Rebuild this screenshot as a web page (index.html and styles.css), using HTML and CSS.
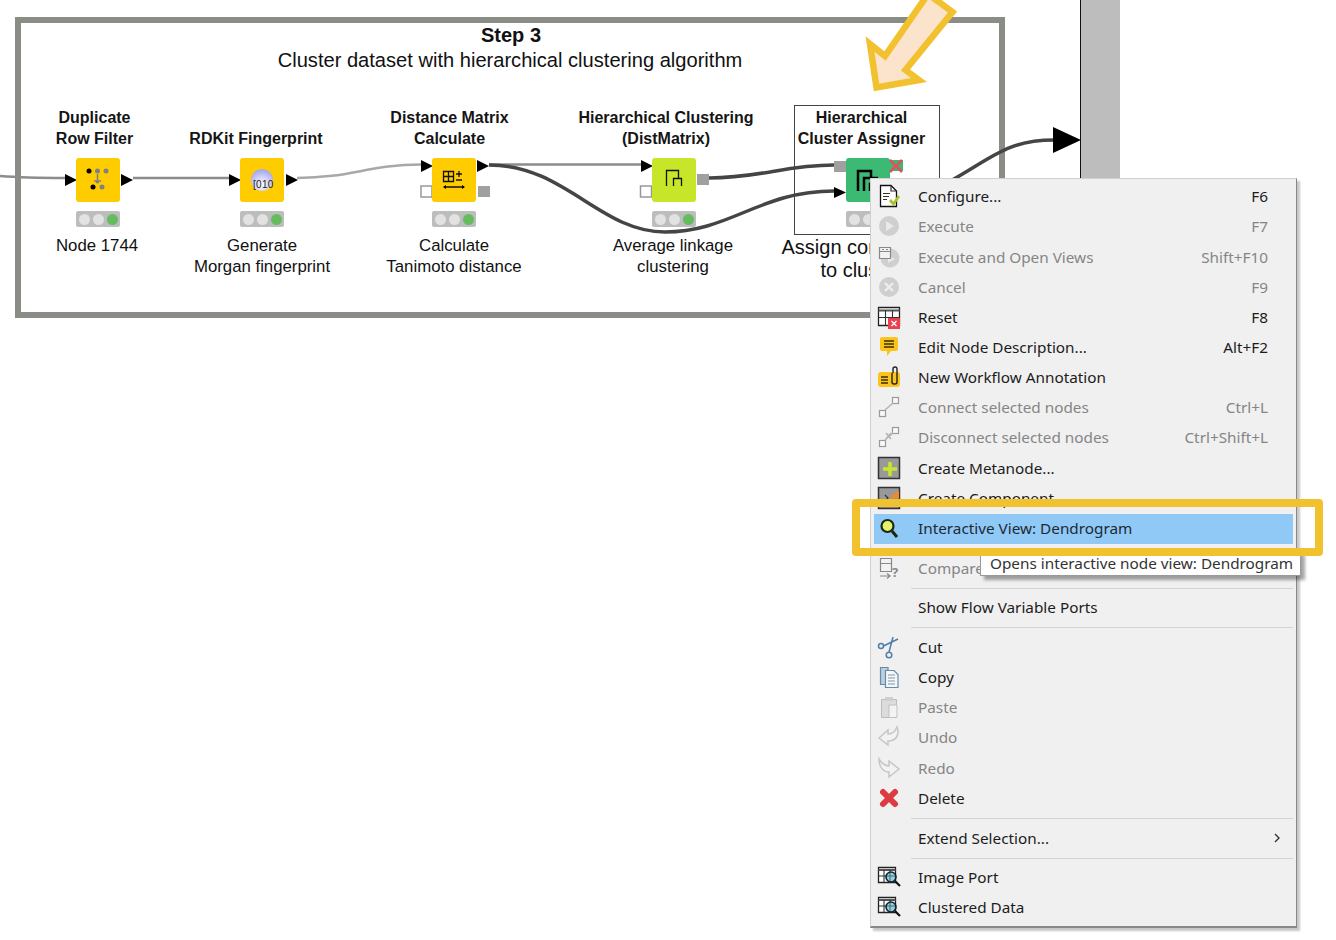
FILE: index.html
```html
<!DOCTYPE html>
<html lang="en">
<head>
<meta charset="utf-8">
<title>Workflow context menu</title>
<link rel="stylesheet" href="styles.css">
</head>
<body>
<main class="canvas">
  <div class="column"></div>
  <section class="frame">
    <h2 class="frame-title">Step 3</h2>
    <p class="frame-sub">Cluster dataset with hierarchical clustering algorithm</p>
  </section>

  <div class="selection"></div>

  <svg class="layer" width="1336" height="940" viewBox="0 0 1336 940">
    <g class="wire-light">
      <path d="M0 176C25 178 45 178 65 178"/>
      <path d="M133 178H229"/>
      <path class="pale" d="M297 178C350 178 370 164.500 421 164.500"/>
      <path d="M489 164.500H641"/>
    </g>
    <g class="wire-dark">
      <path d="M489 165C565 165 600 232 665 232C730 232 760 191 834 191"/>
      <path d="M709 178C760 178 785 165 834 165"/>
      <path d="M945 184C990 160 1005 140 1054 140"/>
    </g>
    <g class="port">
      <path d="M65 174L77 180L65 186Z"/><path d="M121 174L133 180L121 186Z"/>
      <path d="M229 174L241 180L229 186Z"/><path d="M286 174L298 180L286 186Z"/>
      <path d="M421 160L433 166L421 172Z"/><path d="M477 160L489 166L477 172Z"/>
      <path d="M641 160L653 166L641 172Z"/>
      <path d="M834 187L846 192.500L834 198Z"/>
      <path d="M1053 127L1081 140L1053 153Z"/>
    </g>
    <g class="port-empty"><rect x="421" y="186" width="11" height="11"/><rect x="640.500" y="186" width="11" height="11"/></g>
    <g class="port-flow"><rect x="478" y="186" width="12" height="11"/><rect x="697" y="174" width="12" height="11"/><rect x="834" y="161" width="12" height="11"/></g>
  </svg>

  <article class="node n1">
    <div class="box amber">
      <svg width="44" height="44" viewBox="0 0 44 44"><circle cx="13" cy="13" r="2.500"/><circle class="dot-grey" cx="21.500" cy="13" r="2.500"/><circle class="dot-grey" cx="30" cy="13" r="2.500"/><path class="arrow-grey" d="M21.500 16V25M18 23H25M20 24.500H23"/><circle cx="17" cy="29" r="2.500"/><circle class="dot-grey" cx="26" cy="29" r="2.500"/></svg>
    </div>
    <div class="lights"><i></i><i></i><i class="on"></i></div>
  </article>
  <article class="node n2">
    <div class="box amber">
      <svg width="44" height="44" viewBox="0 0 44 44"><defs><radialGradient id="sph" cx="50%" cy="70%" r="65%"><stop offset="0" stop-color="#fff"/><stop offset="1" stop-color="#a8a8ee"/></radialGradient></defs><circle cx="22" cy="22" r="11" fill="url(#sph)"/><text class="bits" x="13" y="30">[010</text></svg>
    </div>
    <div class="lights"><i></i><i></i><i class="on"></i></div>
  </article>
  <article class="node n3">
    <div class="box amber">
      <svg width="44" height="44" viewBox="0 0 44 44"><path class="ink" d="M11.500 13.500H21.500V23.500H11.500ZM16.500 13.500V23.500M11.500 18.500H21.500M24 16H30M27 13V19M24 22H30M12 29H32"/><path d="M11 29L14 27V31ZM33 29L30 27V31Z"/></svg>
    </div>
    <div class="lights"><i></i><i></i><i class="on"></i></div>
  </article>
  <article class="node n4">
    <div class="box lime">
      <svg width="44" height="44" viewBox="0 0 44 44"><path class="ink" d="M14.500 28V12.500H26.500V20.500M21.500 28V20.500H29.500V28"/></svg>
    </div>
    <div class="lights"><i></i><i></i><i class="on"></i></div>
  </article>
  <article class="node n5">
    <div class="box green">
      <svg width="44" height="44" viewBox="0 0 44 44"><path class="ink-thick" d="M12 33V13H25V20M18 33V20H32M24 33V26H32"/></svg>
    </div>
    <div class="lights"><i></i><i></i><i class="on"></i></div>
  </article>
  <svg class="warn" width="14" height="14" viewBox="0 0 14 14"><rect width="14" height="11" y="1" fill="#3cb973"/><path d="M1 1L13 13M13 1L1 13" stroke="#e2505a" stroke-width="2.500"/></svg>

  <div class="tag name l1">Duplicate<br>Row Filter</div>
  <div class="tag name l2">RDKit Fingerprint</div>
  <div class="tag name l3">Distance Matrix<br>Calculate</div>
  <div class="tag name l4">Hierarchical Clustering<br>(DistMatrix)</div>
  <div class="tag name l5">Hierarchical<br>Cluster Assigner</div>
  <div class="tag note d1">Node 1744</div>
  <div class="tag note d2">Generate<br>Morgan fingerprint</div>
  <div class="tag note d3">Calculate<br>Tanimoto distance</div>
  <div class="tag note d4">Average linkage<br>clustering</div>
  <div class="tag note-big d5">Assign compounds<br>to clusters</div>

  <nav class="menu">
    <div class="row"><svg class="ic" viewBox="0 0 24 24"><path class="doc" d="M3.500 1.500H14L19.500 7V22.500H3.500Z"/><path class="doc-l" d="M14 1.500V7H19.500M6 9.500H13M6 12.500H12M6 15.500H10"/><path class="tick" d="M13 16L16.500 20L22 12"/></svg><span>Configure...</span><kbd>F6</kbd></div>
    <div class="row off"><svg class="ic" viewBox="0 0 24 24"><circle class="disc" cx="12" cy="12" r="10"/><path class="disc-in" d="M9 7L17 12L9 17Z"/></svg><span>Execute</span><kbd>F7</kbd></div>
    <div class="row off"><svg class="ic" viewBox="0 0 24 24"><circle class="disc" cx="13" cy="13" r="9.500"/><path class="disc-in" d="M11 10L18 14L11 18Z"/><path class="win" d="M2.500 2.500H13.500V13.500H2.500Z"/><path class="win-l" d="M2.500 6.500H13.500M5 4.500H7M9 4.500H11"/></svg><span>Execute and Open Views</span><kbd>Shift+F10</kbd></div>
    <div class="row off"><svg class="ic" viewBox="0 0 24 24"><circle class="disc" cx="12" cy="12" r="10"/><path class="disc-x" d="M8 8L16 16M16 8L8 16"/></svg><span>Cancel</span><kbd>F9</kbd></div>
    <div class="row"><svg class="ic" viewBox="0 0 24 24"><path class="tbl" d="M1.500 2.500H22.500V20.500H1.500Z"/><path class="tbl-h" d="M1.500 5.500H22.500"/><path class="tbl-l" d="M1.500 12.500H22.500M8.500 5.500V20.500M15.500 5.500V20.500"/><rect class="x-box" x="11" y="13" width="12" height="11"/><path class="x-mark" d="M14.500 16L19.500 21M19.500 16L14.500 21"/></svg><span>Reset</span><kbd>F8</kbd></div>
    <div class="row"><svg class="ic" viewBox="0 0 24 24"><path class="note-ic" d="M5 2H19Q21 2 21 4V14Q21 16 19 16H14L10 21V16H5Q3 16 3 14V4Q3 2 5 2Z"/><path class="note-l" d="M7 6H17M7 9H17M7 12H17"/></svg><span>Edit Node Description...</span><kbd>Alt+F2</kbd></div>
    <div class="row"><svg class="ic" viewBox="0 0 24 24"><rect class="note-ic" x="1" y="7" width="22" height="15" rx="3"/><path class="note-l" d="M4 12H11M4 15H11M4 18H11"/><path class="clip" d="M15 8V17Q15 19 17 19H18Q20 19 20 17V4Q20 2 18 2Q16 2 16 4V8"/></svg><span>New Workflow Annotation</span></div>
    <div class="row off"><svg class="ic" viewBox="0 0 24 24"><rect class="sq" x="2.500" y="15.500" width="6" height="6"/><rect class="sq" x="15.500" y="2.500" width="6" height="6"/><path class="sq-l" d="M8 15L16 8"/></svg><span>Connect selected nodes</span><kbd>Ctrl+L</kbd></div>
    <div class="row off"><svg class="ic" viewBox="0 0 24 24"><rect class="sq" x="2.500" y="15.500" width="6" height="6"/><rect class="sq" x="15.500" y="2.500" width="6" height="6"/><path class="sq-l" d="M8 15L16 8M9 8L14 14M14 8L9 14"/></svg><span>Disconnect selected nodes</span><kbd>Ctrl+Shift+L</kbd></div>
    <div class="row"><svg class="ic" viewBox="0 0 24 24"><rect class="meta" x="1.500" y="1.500" width="21" height="21"/><path class="plus" d="M13 6V20M6 13H20"/></svg><span>Create Metanode...</span></div>
    <div class="row"><svg class="ic" viewBox="0 0 24 24"><rect class="meta" x="1.500" y="1.500" width="21" height="21"/><path class="comp" d="M15 9L22 5V12H14Z"/><path class="comp-l" d="M8 9L11 12L8 15"/></svg><span>Create Component...</span></div>
    <div class="row hot"><svg class="ic" viewBox="0 0 24 24"><circle class="lens" cx="10.500" cy="10" r="6"/><path class="handle" d="M15 15L20 21"/></svg><span>Interactive View: Dendrogram</span></div>
    <hr class="sep">
    <div class="row off"><svg class="ic" viewBox="0 0 24 24"><path class="win" d="M3.500 2.500H14.500V15.500H3.500Z"/><path class="win-l" d="M3.500 7.500H14.500M3 20H13M10 17.500L13 20L10 22.500"/><text class="qm" x="15" y="21">?</text></svg><span class="cut-off">Compare Nodes</span></div>
    <hr class="sep">
    <div class="row"><i class="ic"></i><span>Show Flow Variable Ports</span></div>
    <hr class="sep">
    <div class="row"><svg class="ic" viewBox="0 0 24 24"><circle class="sc" cx="4" cy="11" r="2.500"/><circle class="sc" cx="12" cy="20" r="2.800"/><path class="sc" d="M6.500 11L21 4M12 17L16 2"/></svg><span>Cut</span></div>
    <div class="row"><svg class="ic" viewBox="0 0 24 24"><path class="pg-b" d="M3.500 2.500H11V19.500H3.500Z"/><path class="pg" d="M8.500 5.500H17L21 9.500V22.500H8.500Z"/><path class="pg-l" d="M11 10H18M11 13H18M11 16H18M11 19H18"/></svg><span>Copy</span></div>
    <div class="row off"><svg class="ic" viewBox="0 0 24 24"><path class="cb" d="M4.500 4.500H19.500V22.500H4.500Z"/><rect class="cb-t" x="8" y="2" width="8" height="4"/><path class="cb-p" d="M12 10H20V22.500H12Z"/></svg><span>Paste</span></div>
    <div class="row off"><svg class="ic" viewBox="0 0 24 24"><path class="ar" d="M2 13L11 5V9C15 9 18 7 20 2C23 10 19 16 11 16V20Z"/></svg><span>Undo</span></div>
    <div class="row off"><svg class="ic" viewBox="0 0 24 24"><path class="ar" d="M22 13L12 21V16C7 16 2 12 2 3C5 8 8 10 12 10V5Z"/></svg><span>Redo</span></div>
    <div class="row"><svg class="ic" viewBox="0 0 24 24"><path class="del" d="M6 6L18 18M18 6L6 18"/></svg><span>Delete</span></div>
    <hr class="sep">
    <div class="row"><i class="ic"></i><span>Extend Selection...</span><svg class="chev" width="8" height="12" viewBox="0 0 8 12"><path d="M2 2L6 6L2 10"/></svg></div>
    <hr class="sep">
    <div class="row"><svg class="ic" viewBox="0 0 24 24"><path class="tbl" d="M1.500 2.500H18.500V17.500H1.500Z"/><path class="tbl-h" d="M1.500 5H18.500"/><path class="tbl-l" d="M1.500 11H18.500M7 5V17.500M13 5V17.500"/><circle class="mag" cx="14" cy="12" r="5"/><path class="mag-h" d="M18 16L23 21"/></svg><span>Image Port</span></div>
    <div class="row"><svg class="ic" viewBox="0 0 24 24"><path class="tbl" d="M1.500 2.500H18.500V17.500H1.500Z"/><path class="tbl-h" d="M1.500 5H18.500"/><path class="tbl-l" d="M1.500 11H18.500M7 5V17.500M13 5V17.500"/><circle class="mag" cx="14" cy="12" r="5"/><path class="mag-h" d="M18 16L23 21"/></svg><span>Clustered Data</span></div>
  </nav>

  <div class="tooltip">Opens interactive node view: Dendrogram</div>
  <div class="callout"></div>
  <svg class="layer" width="1336" height="940" viewBox="0 0 1336 940"><path class="big-arrow" d="M876.500 87.500L870 44L885 56L928 -6L952.500 12L905.500 70L919 80Z"/></svg>
</main>
</body>
</html>
```
FILE: styles.css
```css
* { box-sizing: border-box; }
html, body { margin: 0; padding: 0; background: #fff; }
body { font-family: "Liberation Sans", Arial, sans-serif; color: #111; overflow: hidden; }
.canvas { position: relative; width: 1336px; height: 940px; overflow: hidden; }
.layer { position: absolute; left: 0; top: 0; pointer-events: none; }

.column { position: absolute; left: 1080px; top: 0; width: 40px; height: 200px; background: #bdbdbd; border-left: 1px solid #111; }
.frame { position: absolute; left: 15px; top: 17px; width: 990px; height: 301px; border: 6.500px solid #8a8c86; text-align: center; }
.frame-title { margin: 0; position: absolute; left: 2px; width: 976px; top: 0; font-size: 20px; line-height: 24px; font-weight: 700; }
.frame-sub { margin: 0; position: absolute; left: 1px; width: 976px; top: 25px; font-size: 20.100px; line-height: 24px; }
.selection { position: absolute; left: 794px; top: 105px; width: 146px; height: 130px; border: 1.500px solid #444; }

.wire-light path { fill: none; stroke: #8c8c8c; stroke-width: 2.500; }
.wire-light .pale { stroke: #a8a8a8; }
.wire-dark path { fill: none; stroke: #454545; stroke-width: 3.500; }
.port path { fill: #000; }
.port-empty rect { fill: #fff; stroke: #999; stroke-width: 1.500; }
.port-flow rect { fill: #a0a0a0; }

.node { position: absolute; top: 158px; width: 44px; display: flex; flex-direction: column; gap: 9px; }
.n1 { left: 76px; } .n2 { left: 240px; } .n3 { left: 432px; } .n4 { left: 652px; } .n5 { left: 846px; }
.box { width: 44px; height: 44px; border-radius: 3px; display: block; }
.box svg { display: block; }
.amber { background: #ffcc00; }
.lime { background: #c8e629; }
.green { background: #3cb973; }
.lights { height: 16px; background: #bdbdbd; border-radius: 2px; display: flex; align-items: center; justify-content: center; gap: 3px; }
.lights i { width: 11px; height: 11px; border-radius: 50%; background: #e2e2e2; }
.lights .on { background: #66bb5e; }
.warn { position: absolute; left: 889px; top: 159px; }
.dot-grey { fill: #808080; }
.arrow-grey { fill: none; stroke: #808080; stroke-width: 1.500; }
.bits { font-size: 10px; font-family: "Liberation Sans", sans-serif; fill: #222; letter-spacing: .3px; }
.ink { fill: none; stroke: #111; stroke-width: 1.300; }
.ink-thick { fill: none; stroke: #000; stroke-width: 2.500; }

.tag { position: absolute; text-align: center; white-space: nowrap; transform: translateX(-50%); }
.name { font-size: 16px; line-height: 21px; font-weight: 700; top: 107px; color: #151515; }
.note { font-size: 16.800px; line-height: 21px; top: 235px; }
.note-big { font-size: 20px; line-height: 23px; top: 236px; }
.l1 { left: 94.500px; } .l2 { left: 256px; top: 128px; } .l3 { left: 449.500px; } .l4 { left: 666px; } .l5 { left: 861.500px; }
.d1 { left: 97px; } .d2 { left: 262px; } .d3 { left: 454px; } .d4 { left: 673px; } .d5 { left: 866px; }

.menu { position: absolute; left: 870px; top: 178px; width: 427px; padding-top: 3px; background: #f0f0f0; border: 1px solid #d0d0d0; border-right: 1.500px solid #888; border-bottom: 2px solid #888; box-shadow: 3px 3px 2px rgba(0,0,0,.22); font-family: "Noto Sans", "Open Sans", sans-serif; font-size: 15.300px; color: #1c1c1c; padding-bottom: 3px; }
.row { height: 30.150px; margin: 0 3px; padding: 0 25px 1.500px 3px; display: grid; grid-template-columns: 41px 1fr auto; align-items: center; }
.row.off { color: #858585; }
.row.hot { background: #90c8f6; color: #1d2a35; }
.row span { white-space: nowrap; }
.row .cut-off { width: 62px; overflow: hidden; }
.row kbd { font: inherit; }
.ic { width: 24px; height: 24px; display: block; }
.chev { margin-left: 5px; margin-right: -13px; }
.chev path { fill: none; stroke: #333; stroke-width: 1.400; }
.sep { height: 1px; border: 0; margin: 4.300px 3px 4.300px 40px; background: #d4d4d4; }

.doc { fill: #fff; stroke: #111; stroke-width: 1.300; }
.doc-l { fill: none; stroke: #333; stroke-width: 1.200; }
.tick { fill: none; stroke: #a6c32a; stroke-width: 2.800; }
.disc { fill: #cfcfcf; }
.disc-in { fill: #e9e9e9; }
.disc-x { stroke: #eee; stroke-width: 2.400; fill: none; }
.win { fill: #f2f2f2; stroke: #888; stroke-width: 1.200; }
.win-l { fill: none; stroke: #888; stroke-width: 1.200; }
.tbl { fill: #fff; stroke: #222; stroke-width: 1.300; }
.tbl-h { stroke: #555; stroke-width: 2; fill: none; }
.tbl-l { stroke: #333; stroke-width: 1.100; fill: none; }
.x-box { fill: #ea4050; }
.x-mark { stroke: #fff; stroke-width: 1.300; fill: none; }
.note-ic { fill: #fcc419; }
.note-l { stroke: #3a3000; stroke-width: 1.500; fill: none; }
.clip { fill: none; stroke: #222; stroke-width: 1.400; }
.sq { fill: #fafafa; stroke: #9a9a9a; stroke-width: 1.200; }
.sq-l { stroke: #b5b5b5; stroke-width: 1.600; fill: none; }
.meta { fill: #999; stroke: #333; stroke-width: 1.500; }
.plus { stroke: #c8e629; stroke-width: 3.500; fill: none; }
.comp { fill: #f08a24; }
.comp-l { fill: none; stroke: #333; stroke-width: 1.200; }
.lens { fill: #e8f070; stroke: #1a2a12; stroke-width: 2.200; }
.handle { stroke: #1a2a12; stroke-width: 3; fill: none; }
.qm { font: 700 13px "Noto Sans", sans-serif; fill: #888; }
.sc { fill: none; stroke: #4f7fa8; stroke-width: 1.500; }
.pg-b { fill: #b9cfe2; stroke: #6d8aa4; stroke-width: 1.200; }
.pg { fill: #f4f8fb; stroke: #6d8aa4; stroke-width: 1.200; }
.pg-l { stroke: #7d97ad; stroke-width: 1; fill: none; }
.cb { fill: #dcdcdc; stroke: #bcbcbc; stroke-width: 1; }
.cb-t { fill: #cfcfcf; }
.cb-p { fill: #f3f3f3; stroke: #c0c0c0; stroke-width: 1; }
.ar { fill: #f2f2f2; stroke: #c6c6c6; stroke-width: 1.500; }
.del { stroke: #dd3b42; stroke-width: 6; stroke-linecap: round; fill: none; }
.mag { fill: rgba(70,170,190,.55); stroke: #123; stroke-width: 1.600; }
.mag-h { stroke: #111; stroke-width: 2.200; fill: none; }

.tooltip { position: absolute; left: 980px; top: 551px; width: 321px; height: 25px; padding: 2px 0 0 9px; background: #fff; border: 1px solid #999; border-top: 0; box-shadow: 4px 4px 3px rgba(0,0,0,.35); font-family: "Noto Sans", "Open Sans", sans-serif; font-size: 15.300px; line-height: 20px; color: #333; white-space: nowrap; }
.callout { position: absolute; left: 852px; top: 499px; width: 471px; height: 57px; border: 8px solid #f2c12e; border-radius: 4px; }
.big-arrow { fill: #fce3cc; stroke: #f2c12e; stroke-width: 6.500; stroke-linejoin: miter; }
```
